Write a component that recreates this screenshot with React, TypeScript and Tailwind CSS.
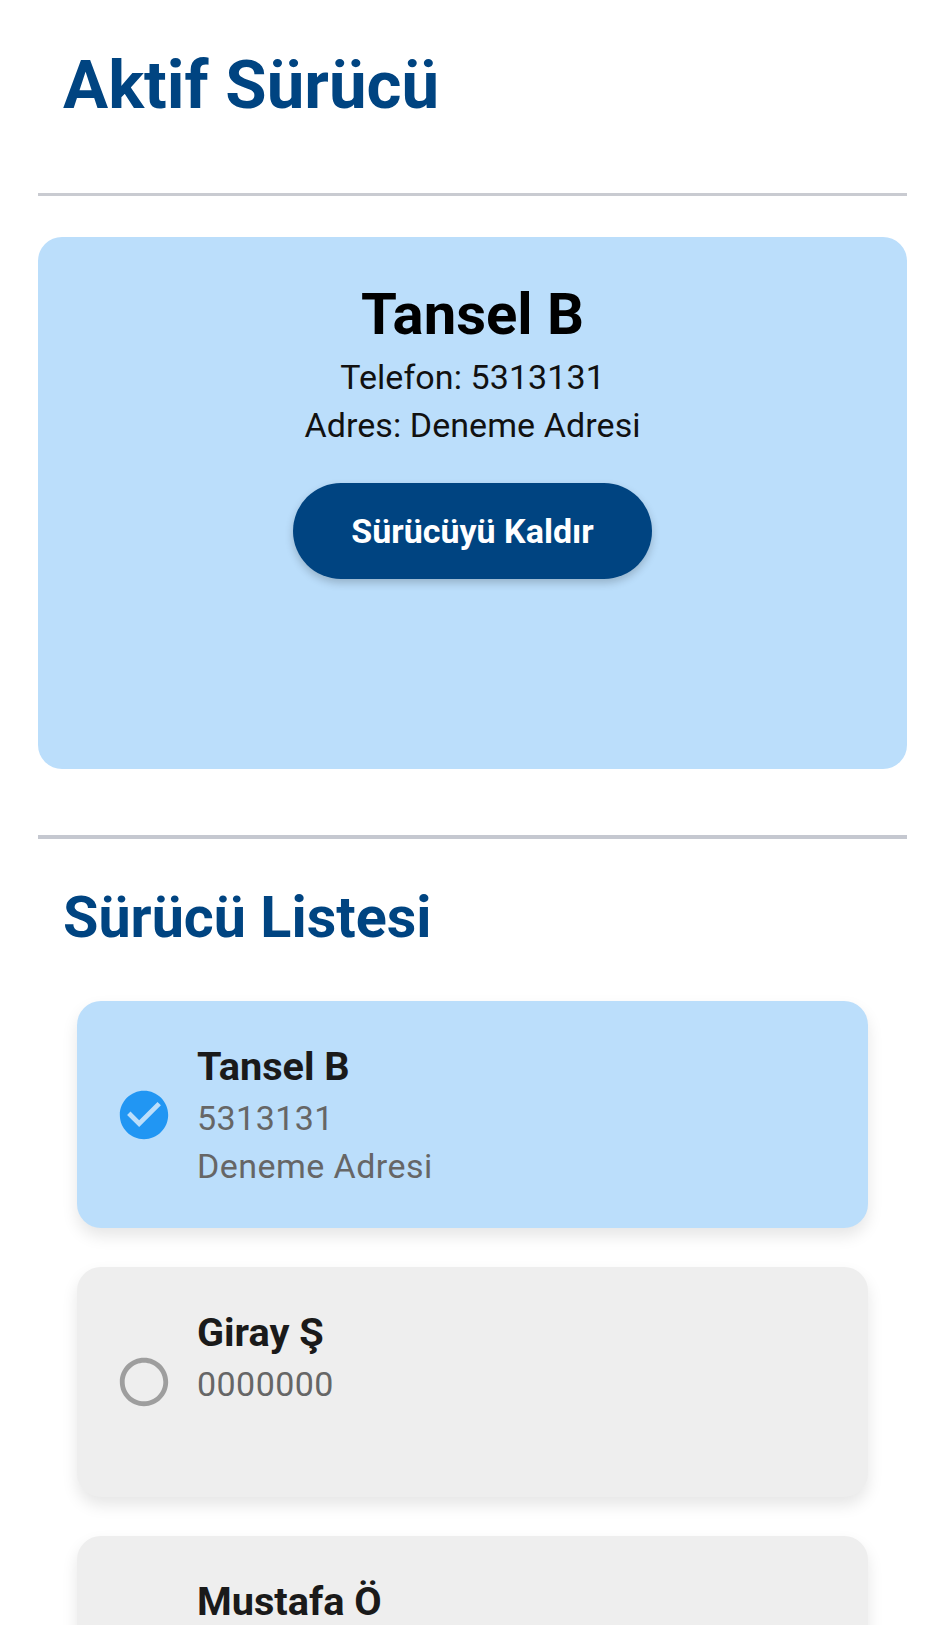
import { MdCheckCircle, MdRadioButtonUnchecked } from 'react-icons/md';

interface Driver {
  name: string;
  phone?: string;
  address?: string;
  selected?: boolean;
}

// the third row runs off the bottom of the screen, only its name shows
const drivers: Driver[] = [
  { name: 'Tansel B', phone: '5313131', address: 'Deneme Adresi', selected: true },
  { name: 'Giray Ş', phone: '0000000' },
  { name: 'Mustafa Ö' },
];

function DriverCard({ driver }: { driver: Driver }) {
  return (
    <div
      className={`flex items-center gap-[24px] rounded-[24px] px-[38px] shadow-[0_8px_16px_rgba(0,0,0,0.1)] ${
        driver.selected ? 'h-[227px] bg-[#bbdefb]' : 'h-[230px] bg-[#eeeeee]'
      }`}
    >
      {driver.selected ? (
        <MdCheckCircle className="size-[58px] shrink-0 text-[#2196f3]" />
      ) : (
        <MdRadioButtonUnchecked className="size-[58px] shrink-0 text-[#9e9e9e]" />
      )}
      <div className="flex h-full flex-col pt-[42px]">
        <p className="text-[39.7px] leading-[48px] font-bold text-[#1a1a1a]">{driver.name}</p>
        {driver.phone ? (
          <p className="mt-[3px] text-[34px] leading-[48px] tracking-[0.45px] text-[#666666]">{driver.phone}</p>
        ) : null}
        {driver.address ? (
          <p className="text-[34px] leading-[48px] tracking-[0.45px] text-[#666666]">{driver.address}</p>
        ) : null}
      </div>
    </div>
  );
}

export default function App() {
  return (
    <div className="h-[1625px] overflow-hidden bg-white pr-[37px] pl-[38px] font-['Roboto',sans-serif]">
      <h1 className="h-[193px] pt-[41px] pl-[25px] text-[67.2px] leading-[88px] font-bold text-[#004481]">
        Aktif Sürücü
      </h1>
      <div className="h-[3px] bg-[#c9cbd1]" />

      <section className="mt-[41px] flex h-[532px] flex-col items-center rounded-[24px] bg-[#bbdefb] pt-[39px]">
        <h2 className="text-[58px] leading-[76px] font-bold text-black">Tansel B</h2>
        <p className="mt-[1px] text-[34px] leading-[48px] tracking-[0.08px] text-[#111111]">Telefon: 5313131</p>
        <p className="text-[34px] leading-[48px] tracking-[0.08px] text-[#111111]">Adres: Deneme Adresi</p>
        <button
          type="button"
          className="mt-[34px] h-[96px] w-[359px] rounded-full bg-[#004481] text-[34px] font-bold text-white shadow-[0_4px_8px_rgba(0,0,0,0.2)]"
        >
          Sürücüyü Kaldır
        </button>
      </section>

      <div className="mt-[66px] h-[4px] bg-[#c5c8d0]" />

      <h2 className="mt-[35px] pl-[25px] text-[57.5px] leading-[88px] font-bold text-[#004481]">Sürücü Listesi</h2>

      <div className="mt-[39px] flex flex-col gap-[39px] px-[39px]">
        {drivers.map((d) => (
          <DriverCard key={d.name} driver={d} />
        ))}
      </div>
    </div>
  );
}
